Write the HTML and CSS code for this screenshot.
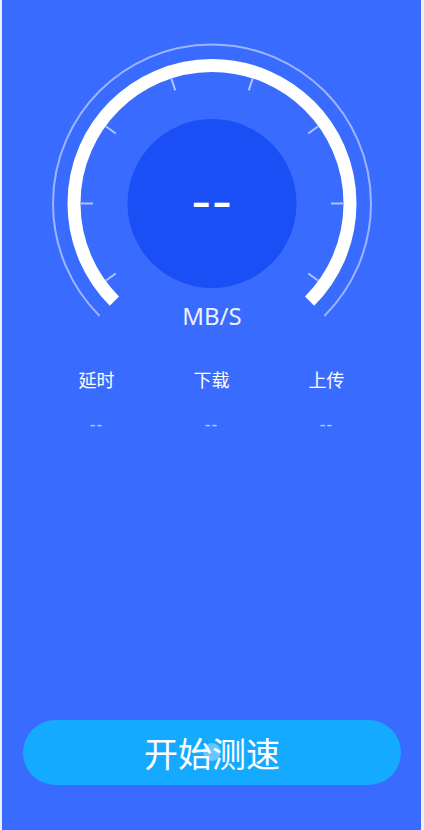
FILE: index.html
```html
<!DOCTYPE html>
<html lang="zh-CN">
<head>
<meta charset="utf-8">
<title>测速</title>
<link rel="stylesheet" href="styles.css">
</head>
<body>
<main class="screen">
  <section class="gauge">
    <svg class="gauge-svg" width="419" height="296" viewBox="0 0 419 296">
      <path class="arc-outer" d="M 97.57 275.93 A 159 159 0 1 1 322.43 275.93" />
      <path class="arc-main" d="M 112.42 261.08 A 138 138 0 1 1 307.58 261.08" />
      <g class="ticks">
        <line x1="210" y1="32.5" x2="210" y2="44.5" transform="rotate(-126 210 163.5)" />
        <line x1="210" y1="32.5" x2="210" y2="44.5" transform="rotate(-90 210 163.5)" />
        <line x1="210" y1="32.5" x2="210" y2="44.5" transform="rotate(-54 210 163.5)" />
        <line x1="210" y1="32.5" x2="210" y2="44.5" transform="rotate(-18 210 163.5)" />
        <line x1="210" y1="32.5" x2="210" y2="44.5" transform="rotate(18 210 163.5)" />
        <line x1="210" y1="32.5" x2="210" y2="44.5" transform="rotate(54 210 163.5)" />
        <line x1="210" y1="32.5" x2="210" y2="44.5" transform="rotate(90 210 163.5)" />
        <line x1="210" y1="32.5" x2="210" y2="44.5" transform="rotate(126 210 163.5)" />
      </g>
      <circle class="core" cx="210" cy="163.5" r="84.5" />
      <text class="speed" transform="translate(210 174) scale(1.65 1)" x="-11.9 0.6" y="0">--</text>
      <text class="unit" x="210" y="285" text-anchor="middle">MB/S</text>
    </svg>
  </section>

  <section class="stats">
    <div class="stat">
      <span class="stat-label">延时</span>
      <span class="stat-value">--</span>
    </div>
    <div class="stat">
      <span class="stat-label">下载</span>
      <span class="stat-value">--</span>
    </div>
    <div class="stat">
      <span class="stat-label">上传</span>
      <span class="stat-value">--</span>
    </div>
  </section>

  <button class="start-btn" type="button">开始测速</button>
</main>
</body>
</html>
```

FILE: styles.css
```css
html, body {
  margin: 0;
  padding: 0;
  height: 100%;
}

body {
  background: #eef0f4;
  font-family: "Noto Sans", "Noto Sans CJK SC", sans-serif;
}

.screen {
  box-sizing: border-box;
  margin-left: 2px;
  width: 419px;
  height: 830px;
  background: #3a6bff;
  display: flex;
  flex-direction: column;
  padding-top: 40px;
  padding-bottom: 45px;
}

.gauge {
  display: flex;
  justify-content: center;
}

.gauge-svg {
  display: block;
}

.arc-outer {
  fill: none;
  stroke: rgba(255, 255, 255, 0.5);
  stroke-width: 2;
}

.arc-main {
  fill: none;
  stroke: #ffffff;
  stroke-width: 13;
}

.ticks line {
  stroke: rgba(255, 255, 255, 0.6);
  stroke-width: 2;
}

.core {
  fill: #1a4ff6;
}

.speed {
  fill: #ffffff;
  font-family: "Noto Sans", sans-serif;
  font-size: 34px;
  font-weight: 700;
}

.unit {
  fill: rgba(255, 255, 255, 0.92);
  font-family: "Noto Sans", sans-serif;
  font-size: 24px;
}

.stats {
  display: grid;
  grid-template-columns: repeat(3, 115px);
  justify-content: center;
  margin-top: 30px;
}

.stat {
  display: flex;
  flex-direction: column;
  align-items: center;
}

.stat-label {
  color: #ffffff;
  font-family: "Noto Sans CJK SC", sans-serif;
  font-size: 18px;
  line-height: 26px;
}

.stat-value {
  margin-top: 22px;
  color: rgba(255, 255, 255, 0.65);
  font-family: "Noto Sans", sans-serif;
  font-size: 18px;
  letter-spacing: 1px;
  line-height: 20px;
}

.start-btn {
  position: relative;
  margin-top: auto;
  margin-left: 21px;
  width: 378px;
  height: 65px;
  border: none;
  border-radius: 33px;
  background: #14aaff;
  color: #ffffff;
  font-family: "Noto Sans CJK SC", sans-serif;
  font-size: 34px;
  padding: 0;
  cursor: pointer;
}

.start-btn::after {
  content: "";
  position: absolute;
  left: 180px;
  top: 23px;
  width: 18px;
  height: 18px;
  border-radius: 50%;
  background: rgba(255, 255, 255, 0.35);
  pointer-events: none;
}
```
